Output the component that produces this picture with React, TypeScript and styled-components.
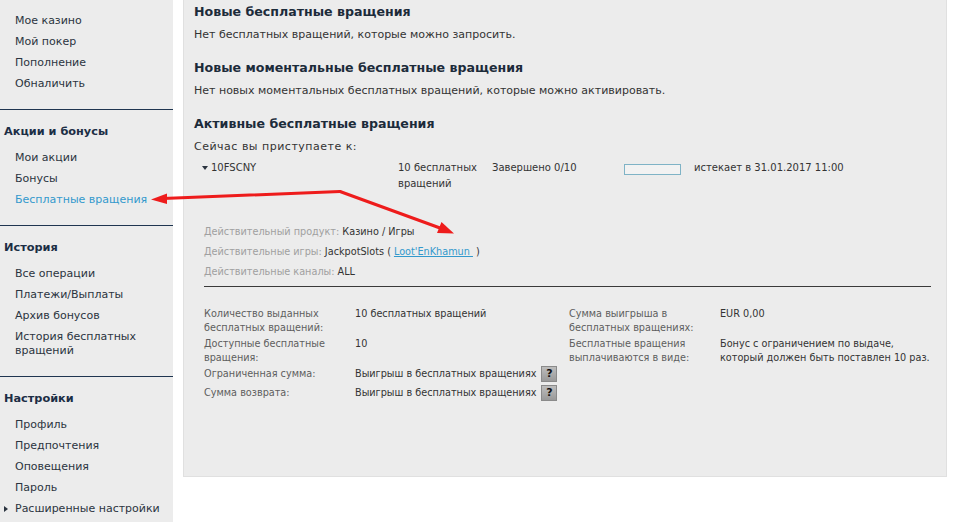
import React from "react";
import styled, { createGlobalStyle } from "styled-components";

const GlobalStyle = createGlobalStyle`
  html, body {
    margin: 0;
    padding: 0;
    background: #ffffff;
    font-family: "DejaVu Sans", Verdana, sans-serif;
    font-size: 11px;
    color: #333333;
  }
`;

const Page = styled.div`
  position: relative;
  display: flex;
  flex-direction: row;
  align-items: flex-start;
  gap: 10px;
  width: 953px;
  height: 522px;
  overflow: hidden;
`;

const Sidebar = styled.nav`
  width: 173px;
  height: 522px;
  background: #ececec;
  flex-shrink: 0;
`;

const Section = styled.div<{ $first?: boolean }>`
  padding: ${(p) => (p.$first ? "8.5px" : "9px")} 0 16px 0;
  border-top: ${(p) => (p.$first ? "none" : "1px solid #1f3550")};
`;

const SectionTitle = styled.div`
  font-weight: bold;
  font-size: 11.3px;
  line-height: 21px;
  height: 21px;
  padding-top: 2px;
  box-sizing: border-box;
  color: #1c2e45;
  padding-left: 4px;
  margin-bottom: 6px;
`;

const NavItem = styled.div<{ $active?: boolean }>`
  position: relative;
  padding: 5.5px 0 1.5px 15px;
  line-height: 14px;
  color: ${(p) => (p.$active ? "#3399cc" : "#2b3440")};
`;

const Caret = styled.span`
  position: absolute;
  left: 4px;
  top: 9px;
  width: 0;
  height: 0;
  border-top: 3.5px solid transparent;
  border-bottom: 3.5px solid transparent;
  border-left: 4px solid #2b3440;
`;

const Main = styled.main`
  width: 764px;
  height: 477px;
  background: #ececec;
  border: 1px solid #e0e0e0;
  border-top: none;
  padding: 3px 0 0 10px;
  box-sizing: border-box;
  flex-shrink: 0;
`;

const Heading = styled.h2<{ $gap?: number }>`
  margin: ${(p) => p.$gap ?? 0}px 0 0 0;
  font-size: 12.6px;
  line-height: 18px;
  font-weight: bold;
  color: #1c2b3a;
`;

const Para = styled.p<{ $spacing?: number }>`
  margin: 7px 0 0 0;
  line-height: 14px;
  letter-spacing: ${(p) => p.$spacing ?? 0}px;
  color: #333333;
`;

const SpinRow = styled.div`
  display: grid;
  grid-template-columns: 196px 94px 132px 70px auto;
  align-items: start;
  margin: 6px 0 0 8px;
  font-size: 10px;
  line-height: 16px;
  color: #333333;
`;

const Code = styled.span`
  display: flex;
  align-items: center;
  gap: 3px;
  &::before {
    content: "";
    width: 0;
    height: 0;
    border-left: 3.5px solid transparent;
    border-right: 3.5px solid transparent;
    border-top: 4px solid #2b3440;
  }
`;

const Progress = styled.div`
  width: 55px;
  height: 9px;
  margin-top: 4px;
  border: 1px solid #7fb3c6;
  background: #f2f2f2;
`;

const Details = styled.div`
  margin: 30px 15px 0 10px;
  padding-bottom: 4px;
  border-bottom: 1px solid #3a3a3a;
  font-size: 9.7px;
`;

const DetailLine = styled.div`
  line-height: 20px;
  color: #333333;
`;

const Label = styled.span`
  color: #a0a0a0;
`;

const GameLink = styled.a`
  color: #3399cc;
  text-decoration: underline;
  margin: 0 3px;
`;

const Stats = styled.div`
  display: grid;
  grid-template-columns: 151px 214px 151px auto;
  grid-template-rows: 30px 28px 19px 19px;
  align-items: start;
  margin: 20px 0 0 10px;
  font-size: 9.7px;
  line-height: 14px;
`;

const StatLabel = styled.div<{ $pad?: boolean }>`
  color: #5e5e5e;
  padding-top: ${(p) => (p.$pad ? "2px" : "0")};
`;

const StatValue = styled.div`
  color: #333333;
  display: flex;
  align-items: center;
  gap: 5px;
`;

const Help = styled.span`
  display: inline-flex;
  align-items: center;
  justify-content: center;
  width: 16px;
  height: 16px;
  margin-top: 1px;
  box-sizing: border-box;
  background: linear-gradient(#bdbdbd, #999999);
  border: 1px solid #8a8a8a;
  font-weight: bold;
  font-size: 11px;
  color: #111;
`;

const Overlay = styled.svg`
  position: absolute;
  left: 0;
  top: 0;
  pointer-events: none;
`;

const App = () => {
  return (
    <>
      <GlobalStyle />
      <Page>
        <Sidebar>
          <Section $first>
            <NavItem>Мое казино</NavItem>
            <NavItem>Мой покер</NavItem>
            <NavItem>Пополнение</NavItem>
            <NavItem>Обналичить</NavItem>
          </Section>
          <Section>
            <SectionTitle>Акции и бонусы</SectionTitle>
            <NavItem>Мои акции</NavItem>
            <NavItem>Бонусы</NavItem>
            <NavItem $active>Бесплатные вращения</NavItem>
          </Section>
          <Section>
            <SectionTitle>История</SectionTitle>
            <NavItem>Все операции</NavItem>
            <NavItem>Платежи/Выплаты</NavItem>
            <NavItem>Архив бонусов</NavItem>
            <NavItem>
              История бесплатных
              <br />
              вращений
            </NavItem>
          </Section>
          <Section>
            <SectionTitle>Настройки</SectionTitle>
            <NavItem>Профиль</NavItem>
            <NavItem>Предпочтения</NavItem>
            <NavItem>Оповещения</NavItem>
            <NavItem>Пароль</NavItem>
            <NavItem>
              <Caret />
              Расширенные настройки
            </NavItem>
          </Section>
        </Sidebar>

        <Main>
          <Heading>Новые бесплатные вращения</Heading>
          <Para>Нет бесплатных вращений, которые можно запросить.</Para>
          <Heading $gap={17}>Новые моментальные бесплатные вращения</Heading>
          <Para>Нет новых моментальных бесплатных вращений, которые можно активировать.</Para>
          <Heading $gap={17}>Активные бесплатные вращения</Heading>
          <Para $spacing={0.5}>Сейчас вы приступаете к:</Para>
          <SpinRow>
            <Code>10FSCNY</Code>
            <span>
              10 бесплатных
              <br />
              вращений
            </span>
            <span>Завершено 0/10</span>
            <Progress />
            <span>истекает в 31.01.2017 11:00</span>
          </SpinRow>

          <Details>
            <DetailLine>
              <Label>Действительный продукт:</Label> Казино / Игры
            </DetailLine>
            <DetailLine>
              <Label>Действительные игры:</Label> JackpotSlots (
              <GameLink href="#">Loot'EnKhamun </GameLink>)
            </DetailLine>
            <DetailLine>
              <Label>Действительные каналы:</Label> ALL
            </DetailLine>
          </Details>

          <Stats>
            <StatLabel>
              Количество выданных
              <br />
              бесплатных вращений:
            </StatLabel>
            <StatValue>10 бесплатных вращений</StatValue>
            <StatLabel>
              Сумма выигрыша в
              <br />
              бесплатных вращениях:
            </StatLabel>
            <StatValue>EUR 0,00</StatValue>

            <StatLabel>
              Доступные бесплатные
              <br />
              вращения:
            </StatLabel>
            <StatValue>10</StatValue>
            <StatLabel>
              Бесплатные вращения
              <br />
              выплачиваются в виде:
            </StatLabel>
            <StatValue>
              Бонус с ограничением по выдаче,
              <br />
              который должен быть поставлен 10 раз.
            </StatValue>

            <StatLabel $pad>Ограниченная сумма:</StatLabel>
            <StatValue>
              Выигрыш в бесплатных вращениях <Help>?</Help>
            </StatValue>
            <div />
            <div />

            <StatLabel $pad>Сумма возврата:</StatLabel>
            <StatValue>
              Выигрыш в бесплатных вращениях <Help>?</Help>
            </StatValue>
            <div />
            <div />
          </Stats>
        </Main>

        <Overlay width="953" height="522" viewBox="0 0 953 522">
          <g stroke="#ee1c1c" strokeWidth="3" fill="none" strokeLinecap="round">
            <line x1="340" y1="191.5" x2="163" y2="198.5" />
            <line x1="340" y1="191.5" x2="440" y2="228" />
          </g>
          <polygon points="151,199.5 167,193.5 167,204" fill="#ee1c1c" />
          <polygon points="454,233.5 437,233 441.5,222" fill="#ee1c1c" />
        </Overlay>
      </Page>
    </>
  );
};

export default App;
